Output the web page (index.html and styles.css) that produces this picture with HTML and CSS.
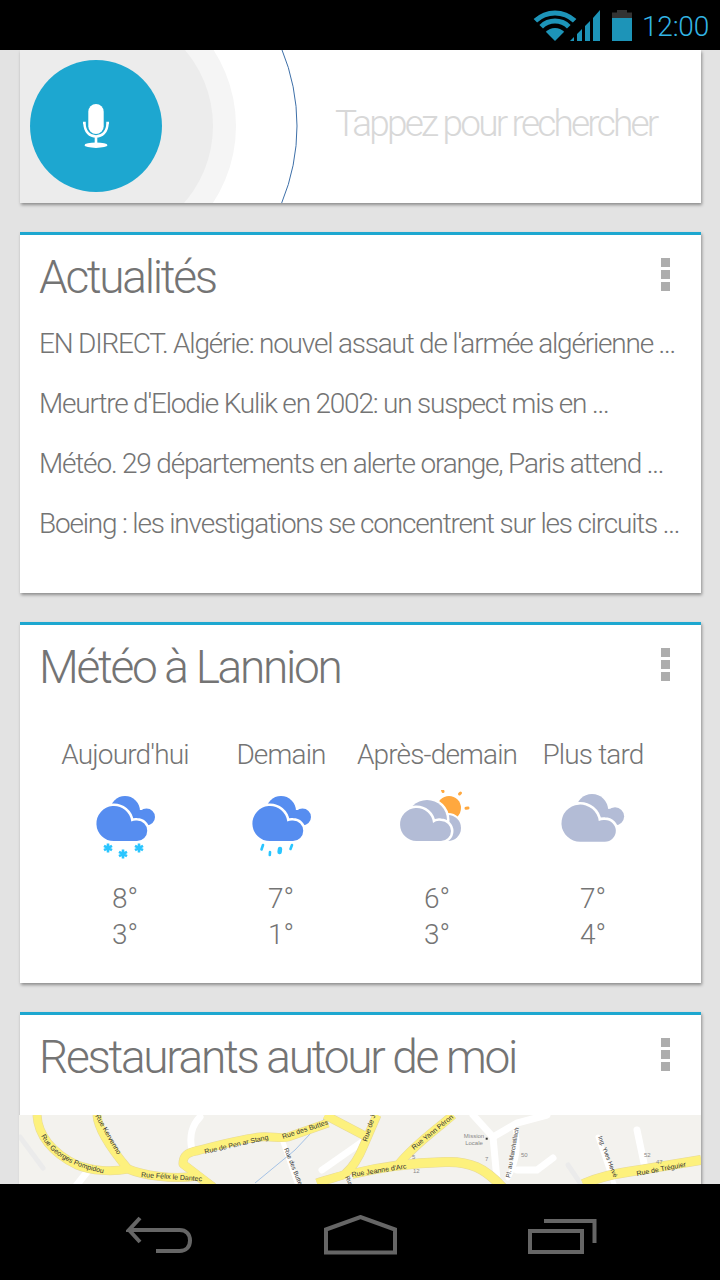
FILE: index.html
```html
<!DOCTYPE html>
<html lang="fr">
<head>
<meta charset="utf-8">
<title>Google Now</title>
<link rel="stylesheet" href="styles.css">
</head>
<body>
<svg class="defs" width="0" height="0" aria-hidden="true">
  <defs>
    <g id="cloud-back">
      <circle cx="29" cy="15" r="15"/>
      <circle cx="50.5" cy="21" r="8.5"/>
      <rect x="20" y="14" width="30" height="22"/>
    </g>
    <path id="cloud-front" d="M18 45A17.5 17.5 0 1 1 35.3 25.5A10.5 10.5 0 0 1 41 24.5A10.25 10.25 0 0 1 41 45Z"/>
    <g id="yellow-roads">
      <path d="M37 1115C38 1135 52 1153 77 1165C92 1171 112 1172 128 1169C142 1175 172 1180 197 1176L213 1187"/>
      <path d="M97 1115C98 1130 112 1150 128 1169"/>
      <path d="M213 1187L183 1164C183 1158 185 1154 192 1152C212 1147 240 1139 260 1137C272 1136 280 1139 288 1137L328 1123"/>
      <path d="M325 1115L367 1137"/>
      <path d="M317 1183C330 1178 340 1177 345 1174C352 1168 358 1160 364 1145L377 1115"/>
      <path d="M453 1115C436 1130 416 1143 398 1165"/>
    </g>
    <g id="yellow-wide">
      <path d="M352 1174C380 1167 412 1163 445 1162C470 1161 485 1168 503 1188"/>
      <path d="M583 1184C600 1177 612 1174 640 1170L701 1160"/>
    </g>
    <path id="georges-line" d="M41 1136C50 1154 72 1168 108 1174"/>
  </defs>
</svg>
<div class="screen">
  <header class="statusbar">
    <svg class="st-wifi" width="44" height="33" viewBox="0 0 44 33">
      <path d="M.6 10.1A31 31 0 0 1 43.4 10.1L39.9 13.6A26 26 0 0 0 4.1 13.6Z"/>
      <path d="M6.4 15.9A22 22 0 0 1 37.6 15.9L34 19.5A17 17 0 0 0 10 19.5Z"/>
      <path d="M12.8 22.8A13 13 0 0 1 31.2 22.8L22 32Z"/>
    </svg>
    <svg class="st-signal" width="30" height="33" viewBox="0 0 30 33">
      <path d="M0 32L4 28V32ZM7 25L12 20V32H7ZM15 17L20 12V32H15ZM23 9L30 1V32H23Z"/>
    </svg>
    <div class="st-battery"><span class="st-cap"></span><span class="st-level"></span></div>
    <span class="st-time">12:00</span>
  </header>

  <main class="feed">
    <section class="card search">
      <svg class="rings" width="681" height="153" viewBox="0 0 681 153">
        <circle cx="76" cy="76" r="201" class="ring-line"/>
        <circle cx="76" cy="76" r="140" class="ring-2"/>
        <circle cx="76" cy="76" r="117" class="ring-1"/>
      </svg>
      <div class="mic">
        <svg width="32" height="50" viewBox="0 0 32 50">
          <rect x="8.3" y="3" width="15.4" height="30" rx="7.7" class="mic-fill"/>
          <path d="M3 22H4.5C4.5 31 10 35.5 16 35.5C22 35.5 27.5 31 27.5 22H29" class="mic-line"/>
          <rect x="14.7" y="35" width="2.6" height="8" class="mic-fill"/>
          <ellipse cx="16" cy="44.2" rx="11.5" ry="2.7" class="mic-fill"/>
        </svg>
      </div>
      <div class="placeholder">Tappez pour rechercher</div>
    </section>

    <section class="card tall">
      <div class="head">
        <h2 class="title">Actualités</h2>
        <div class="dots"><i></i><i></i><i></i></div>
      </div>
      <ul class="news">
        <li>EN DIRECT. Algérie: nouvel assaut de l'armée algérienne ...</li>
        <li>Meurtre d'Elodie Kulik en 2002: un suspect mis en ...</li>
        <li>Météo. 29 départements en alerte orange, Paris attend ...</li>
        <li>Boeing : les investigations se concentrent sur les circuits ...</li>
      </ul>
    </section>

    <section class="card tall">
      <div class="head">
        <h2 class="title">Météo à Lannion</h2>
        <div class="dots"><i></i><i></i><i></i></div>
      </div>
      <div class="forecast">
        <div class="day">
          <div class="day-name">Aujourd'hui</div>
          <svg class="wx" width="80" height="70" viewBox="85 790 80 70">
            <g class="blue" transform="translate(96 796)">
              <use href="#cloud-back"/>
              <use href="#cloud-front" class="front"/>
            </g>
            <g class="snow">
              <path d="M108 843.5V852.5M104 845.8L112 850.2M104 850.2L112 845.8"/>
              <path d="M123 849.5V858.5M119 851.8L127 856.2M119 856.2L127 851.8"/>
              <path d="M139 843.5V852.5M135 845.8L143 850.2M135 850.2L143 845.8"/>
            </g>
          </svg>
          <div class="temps">8°<br>3°</div>
        </div>
        <div class="day">
          <div class="day-name">Demain</div>
          <svg class="wx" width="80" height="70" viewBox="241 790 80 70">
            <g class="blue" transform="translate(252 796)">
              <use href="#cloud-back"/>
              <use href="#cloud-front" class="front"/>
            </g>
            <g class="rain">
              <path d="M263 845L261.5 849.5"/>
              <path d="M270 852L269.8 855"/>
              <path d="M280 849L279.6 852" class="rain-big"/>
              <path d="M292 845L290.5 849"/>
            </g>
          </svg>
          <div class="temps">7°<br>1°</div>
        </div>
        <div class="day">
          <div class="day-name">Après-demain</div>
          <svg class="wx" width="80" height="70" viewBox="397 790 80 70">
            <circle cx="449" cy="808" r="12" class="sun"/>
            <g class="sun-rays">
              <path d="M442.5 790L443 791.5"/>
              <path d="M460.5 793L459.5 794"/>
              <path d="M466 808.3L468 808"/>
            </g>
            <g class="grey">
              <circle cx="448" cy="828" r="13" class="front-thin"/>
              <circle cx="427" cy="820" r="20" class="front"/>
              <path d="M416.5 841A16.5 16.5 0 1 1 433 823A10 10 0 0 1 441 821A10 10 0 0 1 441 841Z" class="front"/>
            </g>
          </svg>
          <div class="temps">6°<br>3°</div>
        </div>
        <div class="day">
          <div class="day-name">Plus tard</div>
          <svg class="wx" width="80" height="70" viewBox="553 790 80 70">
            <g class="grey" transform="translate(561 794) scale(1.07 1.06)">
              <use href="#cloud-back"/>
              <use href="#cloud-front" class="front"/>
            </g>
          </svg>
          <div class="temps">7°<br>4°</div>
        </div>
      </div>
    </section>

    <section class="card map-card">
      <div class="head">
        <h2 class="title">Restaurants autour de moi</h2>
        <div class="dots"><i></i><i></i><i></i></div>
      </div>
      <svg class="map" width="682" height="69" viewBox="19 1115 682 69">
        <rect x="19" y="1115" width="682" height="69" class="map-bg"/>
        <g class="road-ghost">
          <path d="M20 1137L43 1168"/>
          <path d="M568 1165L585 1190"/>
        </g>
        <g class="road-white">
          <path d="M87 1172L76 1186"/>
          <path d="M200 1117C192 1125 189 1137 192 1150"/>
          <path d="M322 1170L362 1142"/>
          <path d="M473 1115L493 1137L497 1180"/>
          <path d="M493 1137L517 1123L547 1115"/>
          <path d="M517 1170H537L553 1158"/>
          <path d="M637 1130L645 1168"/>
        </g>
        <g class="road-thin">
          <path d="M283 1142L298 1186"/>
          <path d="M515 1128C519 1145 518 1160 508 1178"/>
          <path d="M598 1137L614 1184"/>
        </g>
        <path class="water" d="M255 1183L295 1150L325 1118"/>
        <use href="#yellow-roads" class="road-casing"/>
        <use href="#yellow-wide" class="road-casing-wide"/>
        <use href="#yellow-roads" class="road-yellow"/>
        <use href="#yellow-wide" class="road-yellow-wide"/>
        <g class="map-label">
          <text><textPath href="#georges-line">Rue Georges Pompidou</textPath></text>
          <text transform="translate(95 1116) rotate(60)">Rue Kervenno</text>
          <text transform="translate(141 1177) rotate(4)">Rue Félix le Dantec</text>
          <text transform="translate(205 1154) rotate(-13)">Rue de Pen ar Stang</text>
          <text transform="translate(283 1139) rotate(-18)">Rue des Buttes</text>
          <text transform="translate(284 1149) rotate(68)" class="small">Rue des Buttes</text>
          <text transform="translate(345 1177) rotate(65)" class="small">Rue</text>
          <text transform="translate(367 1142) rotate(-72)">Rue de Je</text>
          <text transform="translate(414 1150) rotate(-39)">Rue Yann Péron</text>
          <text transform="translate(352 1177) rotate(-9)">Rue Jeanne d'Arc</text>
          <text transform="translate(510 1178) rotate(-80)" class="small">Pl. au Marchallach</text>
          <text transform="translate(598 1137) rotate(69)" class="small">Ing. Yves Hervé</text>
          <text transform="translate(637 1176) rotate(-11)">Rue de Tréguier</text>
        </g>
        <g class="map-poi">
          <text x="474" y="1138" text-anchor="middle">Mission</text>
          <text x="474" y="1145" text-anchor="middle">Locale</text>
          <text x="413" y="1173">12</text>
          <text x="656" y="1164">47</text>
          <text x="644" y="1157">52</text>
          <text x="521" y="1157">50</text>
          <text x="485" y="1161">7</text>
          <text x="412" y="1159">5</text>
        </g>
        <rect x="485.7" y="1137.7" width="2" height="2" class="poi-dot"/>
      </svg>
    </section>
  </main>

  <nav class="navbar">
    <svg width="67" height="40" viewBox="0 0 67 40">
      <path d="M14 3L3 15H53.5C60 15 64 19 64 25.5C64 32 60 36 53.5 36H30M3 15L14 27" class="nav-line"/>
    </svg>
    <svg width="73" height="40" viewBox="0 0 73 40">
      <path d="M2 14.5L36.5 2L71 14.5V37.5H2Z" class="nav-line"/>
    </svg>
    <svg width="69" height="40" viewBox="0 0 69 40">
      <path d="M16 6H66.5V28" class="nav-line"/>
      <rect x="2" y="16" width="52" height="21" class="nav-line"/>
    </svg>
  </nav>
</div>
</body>
</html>
```

FILE: styles.css
```css
* { box-sizing: border-box; }
html, body { margin: 0; padding: 0; }
body { background: #e3e3e3; font-family: Roboto, "Open Sans", sans-serif; font-weight: 300; color: #747474; }
.defs { position: absolute; }
.screen { width: 720px; height: 1280px; display: flex; flex-direction: column; overflow: hidden; }

.statusbar { height: 50px; flex: none; background: #000; display: flex; align-items: flex-start; padding: 9px 0 0 533px; }
.statusbar svg { fill: #1d94b8; flex: none; }
.st-signal { margin: 0 0 0 -7px; }
.st-battery { width: 20px; height: 31px; margin: 1px 0 0 12px; display: flex; flex-direction: column; }
.st-cap { height: 8px; background: #333; clip-path: polygon(25% 0, 75% 0, 75% 30%, 100% 30%, 100% 100%, 0 100%, 0 30%, 25% 30%); }
.st-level { flex: 1; background: #1d94b8; }
.st-time { margin: 2px 0 0 10px; font-size: 28px; line-height: 32px; letter-spacing: -.2px; font-weight: 300; color: #33b5e5; }

.feed { flex: 1; min-height: 0; overflow: hidden; padding-left: 20px; display: flex; flex-direction: column; gap: 29px; }
.card { flex: none; width: 681px; background: #fff; box-shadow: 1px 2px 3px rgba(0, 0, 0, .38); border-top: 3px solid #1da7d0; }
.tall { height: 361px; }

.search { height: 153px; border-top: 0; position: relative; overflow: hidden; display: flex; }
.rings { position: absolute; left: 0; top: 0; }
.ring-line { fill: #fff; stroke: #3d6fa8; stroke-width: 1; }
.ring-2 { fill: #f5f5f5; }
.ring-1 { fill: #ececec; }
.mic { position: relative; flex: none; width: 132px; height: 132px; margin: 10px 0 0 10px; border-radius: 50%; background: #1da7d0; display: flex; align-items: center; justify-content: center; }
.mic-fill { fill: #fff; }
.mic-line { fill: none; stroke: #fff; stroke-width: 2.5; }
.placeholder { position: relative; margin-left: 173px; align-self: center; font-size: 37px; letter-spacing: -2.8px; color: #d8d8d8; white-space: nowrap; margin-top: -6px; }

.head { display: flex; justify-content: space-between; align-items: flex-start; padding: 12px 31px 0 19px; height: 72px; }
.title { margin: 0; font-size: 46px; line-height: 60px; font-weight: 300; letter-spacing: -2.3px; white-space: nowrap; color: inherit; }
.dots { display: flex; flex-direction: column; gap: 3px; margin-top: 11px; }
.dots i { display: block; width: 9px; height: 9px; background: #adadad; }

.news { list-style: none; margin: 0; padding: 7px 0 0 19px; }
.news li { font-size: 28px; line-height: 60px; letter-spacing: -1.2px; white-space: nowrap; }

.forecast { display: grid; grid-template-columns: repeat(4, 156px); padding: 38px 0 0 27px; }
.day { display: flex; flex-direction: column; align-items: center; }
.day-name { font-size: 28px; line-height: 40px; letter-spacing: -.85px; white-space: nowrap; }
.wx { display: block; margin-top: 15px; }
.temps { margin-top: 21px; font-size: 28px; line-height: 36px; text-align: center; }
.blue { fill: #568df0; }
.grey { fill: #b3bcd6; }
.front { stroke: #fff; stroke-width: 5; paint-order: stroke; }
.front-thin { stroke: #fff; stroke-width: 4; paint-order: stroke; }
.snow { fill: none; stroke: #29c5ff; stroke-width: 2.6; }
.rain { fill: none; stroke: #29c5ff; stroke-width: 2.6; stroke-linecap: round; }
.rain-big { stroke-width: 4.5; }
.sun { fill: #ffa83f; }
.sun-rays { fill: none; stroke: #ffa83f; stroke-width: 3; stroke-linecap: round; }

.map-card { height: 172px; }
.map { display: block; margin: 28px 0 0 -1px; }
.map-bg { fill: #f3f2ee; }
.road-ghost { fill: none; stroke: #ebebeb; stroke-width: 5; stroke-linecap: round; }
.road-white { fill: none; stroke: #fff; stroke-width: 7; stroke-linecap: round; }
.road-thin { fill: none; stroke: #fff; stroke-width: 5; stroke-linecap: round; }
.road-casing { fill: none; stroke: #e6d99a; stroke-width: 9; stroke-linejoin: round; }
.road-yellow { fill: none; stroke: #fdf17d; stroke-width: 8; stroke-linejoin: round; }
.road-casing-wide { fill: none; stroke: #e6d99a; stroke-width: 10; }
.road-yellow-wide { fill: none; stroke: #fdf17d; stroke-width: 9; }
.water { fill: none; stroke: #a5c3e6; stroke-width: 1; }
.map-label text { font-family: "Liberation Sans", sans-serif; font-weight: 400; font-size: 7px; fill: #333; }
.map-label text.small { font-size: 6.2px; }
.map-poi text { font-family: "Liberation Sans", sans-serif; font-weight: 400; font-size: 6px; fill: #888; }
.poi-dot { fill: #333; }

.navbar { height: 96px; flex: none; background: #000; display: flex; justify-content: space-between; align-items: flex-start; padding: 31px 123px 0 126px; }
.nav-line { fill: none; stroke: #666; stroke-width: 4; }
```
